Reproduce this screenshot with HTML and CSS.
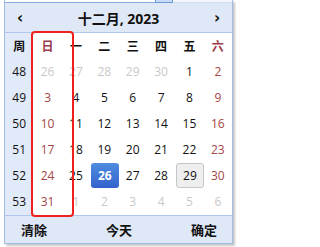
FILE: index.html
```html
<!DOCTYPE html>
<html lang="zh">
<head>
<meta charset="utf-8">
<link rel="stylesheet" href="styles.css">
</head>
<body>
<div class="picker">
  <div class="topstrip"><div class="ts-input"></div><div class="ts-btn"></div><div class="ts-rest"></div></div>
  <div class="head">
    <span class="arrow">‹</span>
    <span class="title">十二月, 2023</span>
    <span class="arrow">›</span>
  </div>
  <div class="grid">
    <div class="wk hd">周</div><div class="hd we">日</div><div class="hd">一</div><div class="hd">二</div><div class="hd">三</div><div class="hd">四</div><div class="hd">五</div><div class="hd we">六</div>

    <div class="wk">48</div><div class="old">26</div><div class="old">27</div><div class="old">28</div><div class="old">29</div><div class="old">30</div><div>1</div><div class="we">2</div>
    <div class="wk">49</div><div class="we">3</div><div>4</div><div>5</div><div>6</div><div>7</div><div>8</div><div class="we">9</div>
    <div class="wk">50</div><div class="we">10</div><div>11</div><div>12</div><div>13</div><div>14</div><div>15</div><div class="we">16</div>
    <div class="wk">51</div><div class="we">17</div><div>18</div><div>19</div><div>20</div><div>21</div><div>22</div><div class="we">23</div>
    <div class="wk">52</div><div class="we">24</div><div>25</div><div class="active">26</div><div>27</div><div>28</div><div class="today">29</div><div class="we">30</div>
    <div class="wk">53</div><div class="we">31</div><div class="old">1</div><div class="old">2</div><div class="old">3</div><div class="old">4</div><div class="old">5</div><div class="old">6</div>
  </div>
  <div class="foot">
    <span>清除</span>
    <span>今天</span>
    <span>确定</span>
  </div>
</div>
<div class="mark"></div>
</body>
</html>
```
FILE: styles.css
```css
html, body {
  margin: 0;
  padding: 0;
  background: #fff;
}
body {
  position: relative;
  width: 242px;
  height: 247px;
  overflow: hidden;
  font-family: "Noto Sans", "Noto Sans CJK SC", sans-serif;
  color: #111;
}
.picker {
  margin-left: 4px;
  width: 229px;
  box-sizing: border-box;
  border: 1px solid #a3bce4;
  border-top: none;
  box-shadow: 2px 2px 2px rgba(0, 0, 0, 0.22);
  background: #fff;
}
.topstrip {
  display: flex;
  height: 3px;
}
.ts-input {
  width: 150px;
  border-bottom: 1px solid #86a9e0;
  background: #fff;
}
.ts-btn {
  width: 16px;
  background: #c7daf5;
  border: 1px solid #6f9ad8;
  border-top: none;
}
.ts-rest {
  flex: 1;
  background: #f3f6fb;
  border-bottom: 1px solid #d3dff1;
}
.head {
  height: 29px;
  background: #dfe8f6;
  border-bottom: 1px solid #b0c6ea;
  display: flex;
  align-items: center;
  justify-content: space-between;
  padding: 0 10px 0 10px;
  font-weight: bold;
}
.arrow {
  font-family: "DejaVu Sans", sans-serif;
  font-size: 15px;
  width: 10px;
  text-align: center;
}
.title {
  font-size: 14px;
  font-family: "Open Sans", "Noto Sans CJK SC", sans-serif;
}
.grid {
  display: grid;
  grid-template-columns: repeat(8, 1fr);
  grid-auto-rows: 26px;
  font-size: 12px;
  font-family: "Open Sans", "Noto Sans CJK SC", sans-serif;
}
.grid > div {
  text-align: center;
  line-height: 26px;
}
.grid .hd {
  font-family: "Noto Sans CJK SC", sans-serif;
  font-weight: bold;
  font-size: 12px;
}
.grid .wk {
  background: #e1eaf8;
}
.grid .we {
  color: #a34646;
}
.grid .hd.we {
  color: #9a3a4a;
}
.grid .old {
  color: #c8c8c8;
}
.grid .active {
  height: 25px;
  line-height: 25px;
  border-radius: 3px;
  background: linear-gradient(#4d8de0, #3562cc);
  color: #fff;
  font-weight: bold;
  margin: 0 0 1px 1px;
}
.grid .today {
  height: 25px;
  line-height: 23px;
  box-sizing: border-box;
  border-radius: 3px;
  background: #eeeeee;
  border: 1px solid #c6c6c6;
  margin: 0 0 1px 1px;
}
.foot {
  height: 27px;
  background: #dfe8f6;
  border-top: 1px solid #b0c6ea;
  display: flex;
  align-items: center;
  justify-content: space-between;
  padding: 0 15px 0 16px;
  font-family: "Noto Sans CJK SC", sans-serif;
  font-weight: bold;
  font-size: 13px;
}
.mark {
  position: absolute;
  left: 31px;
  top: 31px;
  width: 43px;
  height: 186px;
  box-sizing: border-box;
  border: 2px solid #f0201e;
  border-radius: 4px;
}
```
